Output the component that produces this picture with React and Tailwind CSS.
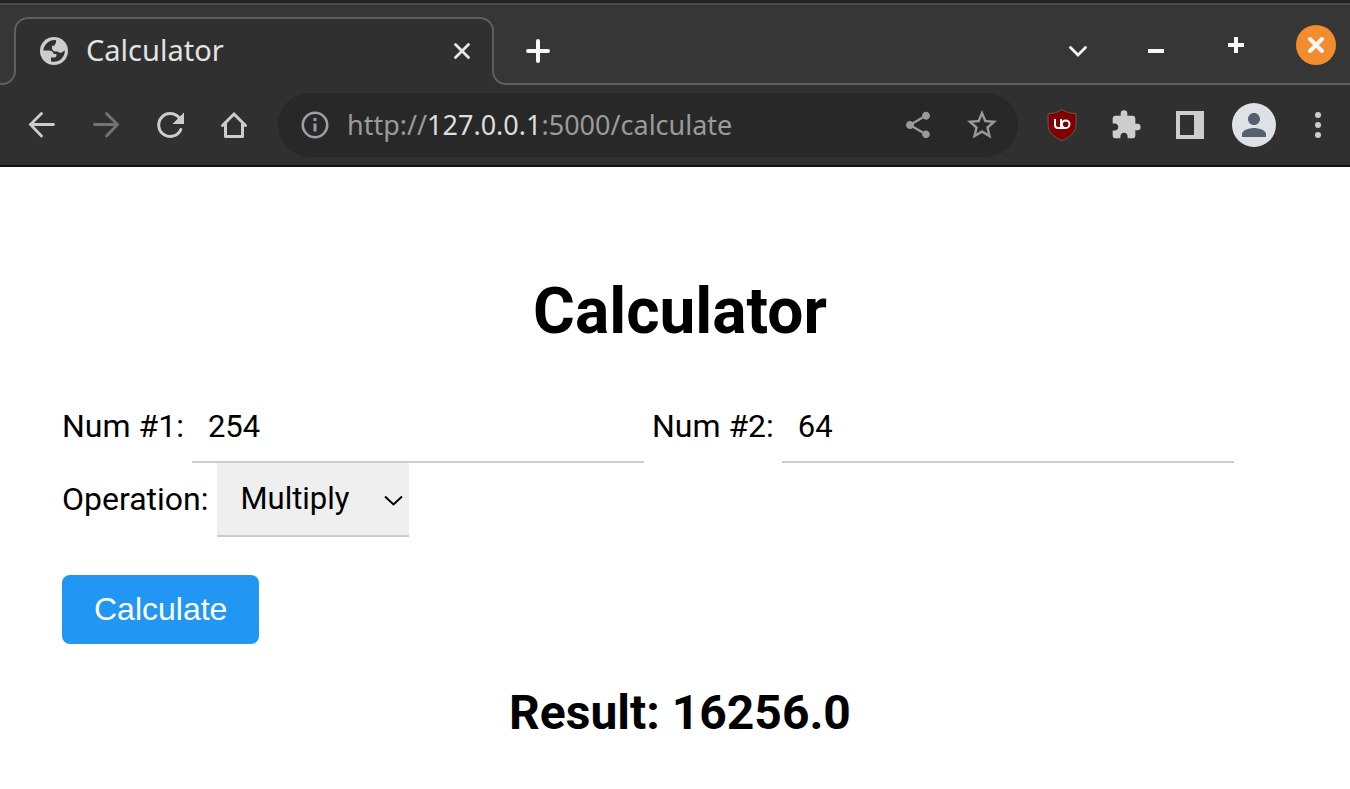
import { useState } from "react";
import {
  MdShare,
  MdStarBorder,
  MdExtension,
  MdPerson,
} from "react-icons/md";

function GlobeIcon() {
  return (
    <svg className="size-7 shrink-0" viewBox="0 0 28 28" aria-hidden="true">
      <circle cx="14" cy="14" r="14" fill="#cdcdcd" />
      <path
        fill="#303030"
        d="M16 3.200C10 2.200 4.200 6.600 3.200 13.500H9C11.500 13.500 13.600 14.800 13.600 17H17V14.500H15.500C13.500 14.500 12 13 12 11V8.800H14.500C14.500 7 16 6.500 16 5.500Z"
      />
      <path
        fill="#303030"
        d="M24.800 13.500C25 19.800 20 24.800 14 24.800C13 24.800 12 24.700 11 24.400V20.500H14.500C16 20.500 16.500 19.500 16.500 18V14.500C18 14.500 18.500 15.700 20.500 15.700C22.500 15.700 23.500 14 24.800 13.500Z"
      />
    </svg>
  );
}

function TabStrip() {
  return (
    <div className="flex h-[82px] border-t-2 border-[#4a4a4a] bg-[#363636]">
      <div className="flex w-4 flex-col justify-end">
        <div className="bg-[#303030]">
          <div className="h-4 rounded-br-[14px] border-r-2 border-b-2 border-[#5f5f5f] bg-[#363636]" />
        </div>
      </div>
      <div className="-mx-[2px] flex h-[68px] w-[480px] flex-col self-end">
        <div className="h-[52px] shrink-0 rounded-t-[14px] border-2 border-b-0 border-[#5f5f5f] bg-[#303030]">
          <div className="flex h-16 items-center pr-[18px] pl-6">
            <GlobeIcon />
            <span className="ml-[18px] flex-1 pb-[2px] font-['Noto_Sans',sans-serif] text-[29px] text-[#e3e3e3]">Calculator</span>
            <button type="button" aria-label="Close tab" className="p-1">
              <svg className="size-4" viewBox="0 0 16 16" fill="none" stroke="#e8e8e8" strokeWidth="2.800" strokeLinecap="round">
                <path d="M1.500 1.500l13 13M14.500 1.500L1.500 14.500" />
              </svg>
            </button>
          </div>
        </div>
        <div className="mx-[2px] h-4 bg-[#303030]" />
      </div>
      <div className="flex w-4 flex-col justify-end">
        <div className="bg-[#303030]">
          <div className="h-4 rounded-bl-[14px] border-b-2 border-l-2 border-[#5f5f5f] bg-[#363636]" />
        </div>
      </div>
      <div className="flex flex-1 items-center border-b-2 border-[#5f5f5f] pt-[2px]">
        <button type="button" aria-label="New tab" className="mt-3 ml-4 p-[2px]">
          <svg className="size-6" viewBox="0 0 24 24" fill="none" stroke="#f8f8f8" strokeWidth="4" strokeLinecap="round">
            <path d="M12 2v20M2 12h20" />
          </svg>
        </button>
        <button type="button" aria-label="Search tabs" className="mt-3 mr-[61px] ml-auto">
          <svg className="size-[18px]" viewBox="0 0 18 18" fill="none" stroke="#f4f4f4" strokeWidth="2.800" strokeLinecap="round">
            <path d="M1.500 5.500L9 13l7.500-7.500" />
          </svg>
        </button>
        <button type="button" aria-label="Minimize" className="mt-3 mr-16">
          <svg className="size-4" viewBox="0 0 16 16" fill="#f8f8f8">
            <path d="M0 6h16v4H0z" />
          </svg>
        </button>
        <button type="button" aria-label="Maximize" className="mr-[52px]">
          <svg className="size-4" viewBox="0 0 16 16" fill="#f8f8f8">
            <path d="M6 0h4v6h6v4h-6v6H6v-6H0V6h6z" />
          </svg>
        </button>
        <button type="button" aria-label="Close window" className="mr-[14px] flex size-10 items-center justify-center rounded-full bg-[#f28c2c]">
          <svg className="size-4" viewBox="0 0 16 16" fill="none" stroke="#f8f8f8" strokeWidth="4" strokeLinecap="round">
            <path d="M2 2l12 12M14 2L2 14" />
          </svg>
        </button>
      </div>
    </div>
  );
}

function Toolbar() {
  return (
    <div className="flex h-[82px] items-center border-b-2 border-[#141414] bg-[#303030] pr-4 text-[#cdcdcd]">
      <div className="flex items-center gap-8 pl-[26px]">
        <button type="button" aria-label="Back">
          <svg className="size-8" viewBox="0 0 32 32" fill="none" stroke="currentColor" strokeWidth="2.800" strokeLinecap="round">
            <path d="M27.500 15.500H4.500M15.500 4.500L4.500 15.500l11 11.500" />
          </svg>
        </button>
        <button type="button" aria-label="Forward" className="text-[#747474]">
          <svg className="size-8" viewBox="0 0 32 32" fill="none" stroke="currentColor" strokeWidth="2.800" strokeLinecap="round">
            <path d="M4.500 15.500h23M16.500 4.500l11 11-11 11.500" />
          </svg>
        </button>
        <button type="button" aria-label="Reload">
          <svg className="size-8" viewBox="0 0 32 32" fill="none" stroke="currentColor" strokeWidth="3" strokeLinecap="round">
            <path d="M26.800 20.500A11.500 11.500 0 1 1 25 8.500" />
            <path d="M30 3.500v11.500H18.500z" fill="currentColor" stroke="none" />
          </svg>
        </button>
        <button type="button" aria-label="Home">
          <svg className="size-8" viewBox="0 0 32 32" fill="none" stroke="currentColor" strokeWidth="3" strokeLinecap="round">
            <path d="M4.500 16.500L16 5l11.500 11.500" />
            <path d="M7.500 15v12.500h17V15" strokeLinejoin="round" />
          </svg>
        </button>
      </div>
      <div className="ml-7 flex h-16 flex-1 items-center rounded-full bg-[#282828] pr-[18px] pl-[23px] text-[#9a9a9a]">
        <svg className="size-7 shrink-0" viewBox="0 0 28 28" fill="none" stroke="#9aa0a6" aria-hidden="true">
          <circle cx="14" cy="14" r="12.200" strokeWidth="2.600" />
          <path d="M14 12.500v8M14 7v3" strokeWidth="3" />
        </svg>
        <a href="http://127.0.0.1:5000/calculate" className="ml-[18px] flex-1 font-['Noto_Sans',sans-serif] text-[27px] whitespace-nowrap">
          http://<span className="text-[#dedede]">127.0.0.1</span>:5000/calculate
        </a>
        <button type="button" aria-label="Share">
          <MdShare className="size-8" />
        </button>
        <button type="button" aria-label="Bookmark" className="ml-[30px]">
          <MdStarBorder className="size-9" />
        </button>
      </div>
      <div className="ml-7 flex items-center gap-8">
        <button type="button" aria-label="uBlock Origin">
          <svg className="size-8" viewBox="0 0 32 32">
            <path d="M16 .500C12 3.500 7 4.500 2 4.500V15c0 9 6.500 13 14 16.500C23.500 28 30 24 30 15V4.500C25 4.500 20 3.500 16 .500Z" fill="#800000" stroke="#6c5555" />
            <path d="M9 10v6a3 3 0 0 0 3 3h7.500M15 10v9" fill="none" stroke="#fff" strokeWidth="2" />
            <circle cx="19.700" cy="15.200" r="3.800" fill="none" stroke="#fff" strokeWidth="2" />
          </svg>
        </button>
        <button type="button" aria-label="Extensions">
          <MdExtension className="size-8" />
        </button>
        <button type="button" aria-label="Side panel">
          <svg className="size-8" viewBox="0 0 32 32" fill="currentColor" fillRule="evenodd">
            <path d="M2 2h28v28H2zM6 6v20h14V6z" />
          </svg>
        </button>
        <button type="button" aria-label="Profile" className="-mx-[6px] flex size-11 items-center justify-center rounded-full bg-[#dee1e6] text-[#566070]">
          <MdPerson className="size-9" />
        </button>
        <button type="button" aria-label="Menu">
          <svg className="size-8" viewBox="0 0 32 32" fill="currentColor">
            <circle cx="16" cy="6" r="3" />
            <circle cx="16" cy="16" r="3" />
            <circle cx="16" cy="26" r="3" />
          </svg>
        </button>
      </div>
    </div>
  );
}

const label = "pb-[2px]";
const field = "h-[72px] w-[452px] border-b-2 border-[#cccccc] px-4 text-[31px] outline-none";

export default function App() {
  const [a, setA] = useState("254");
  const [b, setB] = useState("64");
  const [op, setOp] = useState("Multiply");
  return (
    <div className="min-h-screen bg-white font-['Roboto',sans-serif] text-[32px] text-black">
      <header className="border-t-[3px] border-[#232323]">
        <TabStrip />
        <Toolbar />
      </header>
      <main className="pt-[107px] pr-[52px] pl-[62px]">
        <h1 className="text-center text-[64px] leading-[76px] font-bold">Calculator</h1>
        <form className="mt-[41px]" onSubmit={(e) => e.preventDefault()}>
          <div className="flex flex-wrap items-center gap-x-2">
            <label htmlFor="num1" className={label}>Num #1:</label>
            <input id="num1" className={field} value={a} onChange={(e) => setA(e.target.value)} />
            <label htmlFor="num2" className={label}>Num #2:</label>
            <input id="num2" className={field} value={b} onChange={(e) => setB(e.target.value)} />
          </div>
          <div className="flex items-center gap-2">
            <label htmlFor="operation" className={label}>Operation:</label>
            <div className="relative">
              <select
                id="operation"
                className="h-[74px] w-48 appearance-none border-b-2 border-[#cccccc] bg-[#efefef] pl-6 text-[31px] outline-none"
                value={op}
                onChange={(e) => setOp(e.target.value)}
              >
                <option>Add</option>
                <option>Subtract</option>
                <option>Multiply</option>
                <option>Divide</option>
              </select>
              <svg className="pointer-events-none absolute top-7 right-[6px] size-5" viewBox="0 0 20 20" fill="none" stroke="#000" strokeWidth="2" aria-hidden="true">
                <path d="M2 5.500L10.500 13.500L19 5.500" />
              </svg>
            </div>
          </div>
          <button type="submit" className="mt-[38px] h-[69px] rounded-lg bg-[#2196f3] px-8 pb-[2px] font-['Liberation_Sans',sans-serif] text-white">
            Calculate
          </button>
        </form>
        <h2 className="mt-[41px] text-center text-[48px] leading-[56px] font-bold">Result: 16256.0</h2>
      </main>
    </div>
  );
}
